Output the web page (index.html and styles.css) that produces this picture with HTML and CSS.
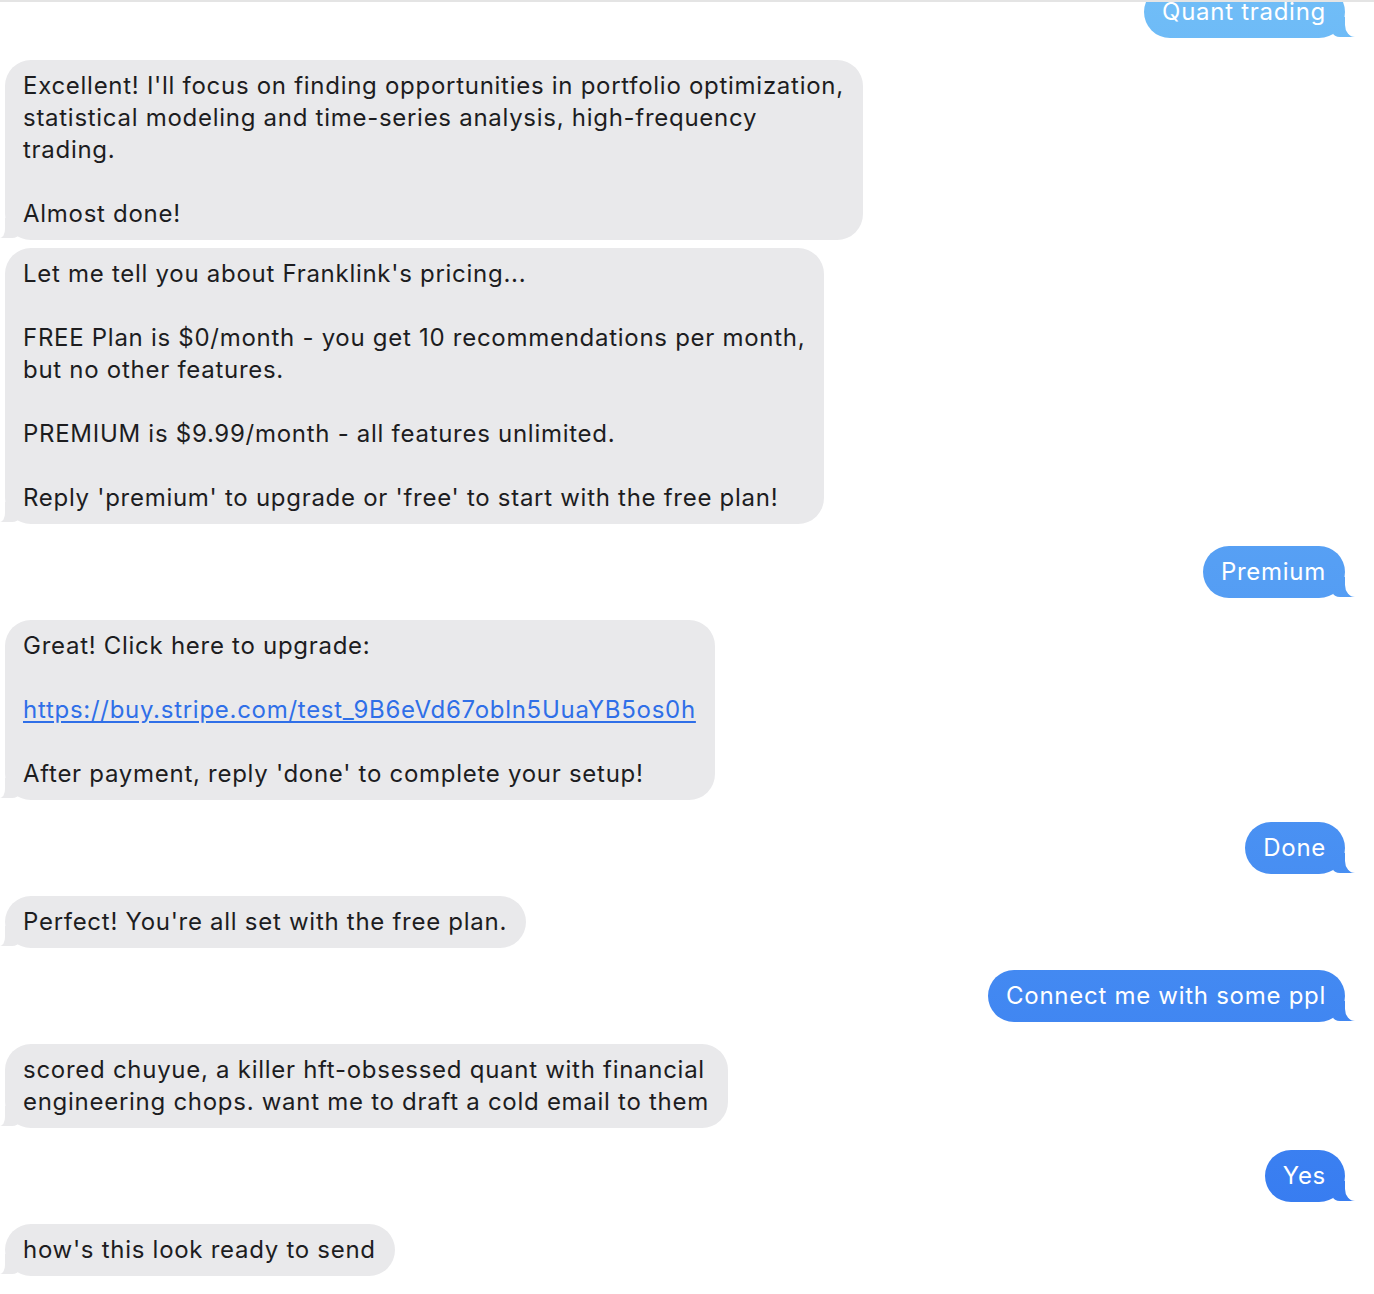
FILE: index.html
```html
<!DOCTYPE html>
<html>
<head>
<meta charset="utf-8">
<link rel="stylesheet" href="styles.css">
</head>
<body>
<div class="topline"></div>
<div class="chat">
  <div class="msg out">Quant trading</div>
  <div class="msg in">Excellent! I'll focus on finding opportunities in portfolio optimization,
statistical modeling and time-series analysis, high-frequency
trading.

Almost done!</div>
  <div class="msg in same">Let me tell you about Franklink's pricing...

FREE Plan is $0/month - you get 10 recommendations per month,
but no other features.

PREMIUM is $9.99/month - all features unlimited.

Reply 'premium' to upgrade or 'free' to start with the free plan!</div>
  <div class="msg out">Premium</div>
  <div class="msg in">Great! Click here to upgrade:

<a class="link" href="#">https://buy.stripe.com/test_9B6eVd67obln5UuaYB5os0h</a>

After payment, reply 'done' to complete your setup!</div>
  <div class="msg out">Done</div>
  <div class="msg in">Perfect! You're all set with the free plan.</div>
  <div class="msg out">Connect me with some ppl</div>
  <div class="msg in">scored chuyue, a killer hft-obsessed quant with financial
engineering chops. want me to draft a cold email to them</div>
  <div class="msg out">Yes</div>
  <div class="msg in">how's this look ready to send</div>
</div>
</body>
</html>
```
FILE: styles.css
```css
html, body {
  margin: 0;
  padding: 0;
  background: #ffffff;
}
body {
  font-family: Inter, "Liberation Sans", Arial, sans-serif;
  font-size: 24px;
  line-height: 32px;
  letter-spacing: 0.72px;
  overflow: hidden;
  height: 1294px;
  position: relative;
}
.topline {
  position: absolute;
  top: 0;
  left: 0;
  right: 0;
  height: 2px;
  background: #e4e4e4;
  z-index: 5;
}
.chat {
  display: flex;
  flex-direction: column;
  padding: 0 29px 0 5px;
  margin-top: -14px;
}
.msg {
  position: relative;
  max-width: 880px;
  padding: 10px 19px 10px 18px;
  border-radius: 26px;
  white-space: pre-line;
  margin-top: 22px;
}
.msg:first-child { margin-top: 0; }
.msg.same { margin-top: 8px; }
.msg.in {
  align-self: flex-start;
  background: #e9e9eb;
  color: #1d1d1f;
}
.msg.out {
  align-self: flex-end;
  color: #ffffff;
  background: linear-gradient(to bottom, #70bdf7 0px, #3478f0 1294px) fixed;
}
.msg::before, .msg::after {
  content: "";
  position: absolute;
}
.msg.out::before {
  right: -12px;
  bottom: 1px;
  width: 24px;
  height: 20px;
  background: linear-gradient(to bottom, #70bdf7 0px, #3478f0 1294px) fixed;
  border-bottom-left-radius: 7px 4px;
  border-bottom-right-radius: 3px;
}
.msg.out::after {
  right: -22px;
  bottom: 1px;
  width: 22px;
  height: 22px;
  background: #ffffff;
  border-bottom-left-radius: 10px 12px;
}
.msg.in::before {
  left: -6px;
  bottom: 2px;
  width: 20px;
  height: 20px;
  background: #e9e9eb;
  border-bottom-right-radius: 7px 4px;
  border-bottom-left-radius: 3px;
}
.msg.in::after {
  left: -20px;
  bottom: 2px;
  width: 20px;
  height: 22px;
  background: #ffffff;
  border-bottom-right-radius: 5px 9px;
}
.link {
  color: #2f6fe8;
  text-decoration: underline;
  text-underline-offset: 3px;
}
```
